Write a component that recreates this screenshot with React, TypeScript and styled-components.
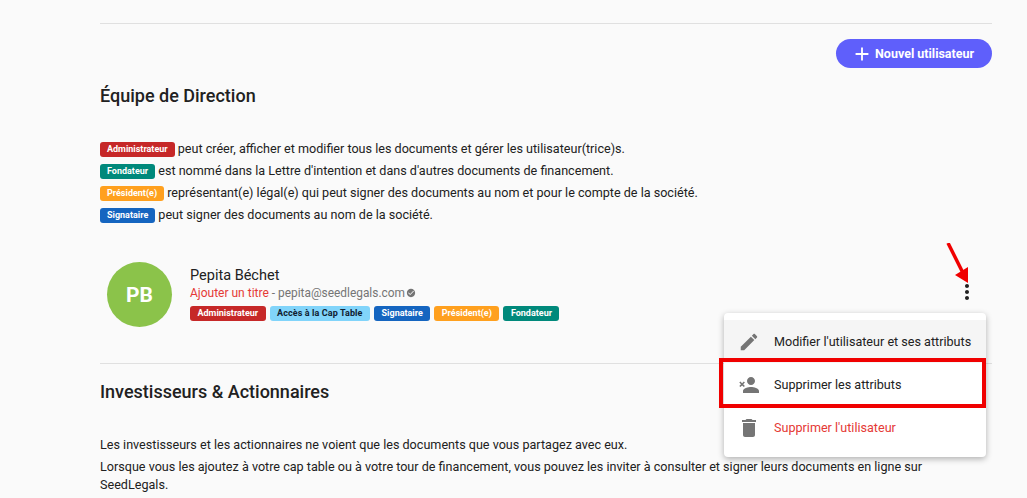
import React from "react";
import styled, { createGlobalStyle } from "styled-components";

const GlobalStyle = createGlobalStyle`
  html, body {
    margin: 0;
    padding: 0;
    height: 498px;
    overflow: hidden;
    background: #fafafa;
    font-family: Roboto, "Liberation Sans", sans-serif;
    color: #212121;
  }
`;

const COLORS: Record<string, string> = {
  red: "#c62828",
  teal: "#00897b",
  orange: "#ffa01e",
  blue: "#1565c0",
  sky: "#81d4fa",
};

function Icon({ d, size = 24, color = "#757575" }: { d: string; size?: number; color?: string }) {
  return (
    <svg width={size} height={size} viewBox="0 0 24 24" fill={color}>
      <path d={d} />
    </svg>
  );
}

function App() {
  return (
    <Page>
      <GlobalStyle />
      <Content>
        <Rule />
        <ButtonRow>
          <AddButton>
            <Icon d="M19 13h-6v6h-2v-6H5v-2h6V5h2v6h6v2z" size={22} color="#fff" />
            Nouvel utilisateur
          </AddButton>
        </ButtonRow>
        <Heading>Équipe de Direction</Heading>
        <Legend>
          <LegendLine>
            <Tag $color="red">Administrateur</Tag> peut créer, afficher et modifier tous les documents et gérer les utilisateur(trice)s.
          </LegendLine>
          <LegendLine>
            <Tag $color="teal">Fondateur</Tag> est nommé dans la Lettre d'intention et dans d'autres documents de financement.
          </LegendLine>
          <LegendLine>
            <Tag $color="orange">Président(e)</Tag> représentant(e) légal(e) qui peut signer des documents au nom et pour le compte de la société.
          </LegendLine>
          <LegendLine>
            <Tag $color="blue">Signataire</Tag> peut signer des documents au nom de la société.
          </LegendLine>
        </Legend>
        <UserRow>
          <Avatar>PB</Avatar>
          <UserInfo>
            <UserName>Pepita Béchet</UserName>
            <UserMeta>
              <RedText>Ajouter un titre</RedText> - pepita@seedlegals.com
              <Icon
                d="M12 2C6.48 2 2 6.48 2 12s4.48 10 10 10 10-4.48 10-10S17.52 2 12 2zm-2 15l-5-5 1.41-1.41L10 14.17l7.59-7.59L19 8l-9 9z"
                size={10}
              />
            </UserMeta>
            <TagRow>
              <Tag $color="red">Administrateur</Tag>
              <Tag $color="sky" $dark>Accès à la Cap Table</Tag>
              <Tag $color="blue">Signataire</Tag>
              <Tag $color="orange">Président(e)</Tag>
              <Tag $color="teal">Fondateur</Tag>
            </TagRow>
          </UserInfo>
          <MoreButton>
            <Icon
              d="M12 8c1.1 0 2-.9 2-2s-.9-2-2-2-2 .9-2 2 .9 2 2 2zm0 2c-1.1 0-2 .9-2 2s.9 2 2 2 2-.9 2-2-.9-2-2-2zm0 6c-1.1 0-2 .9-2 2s.9 2 2 2 2-.9 2-2-.9-2-2-2z"
              color="#212121"
            />
          </MoreButton>
        </UserRow>
        <Rule />
        <SecondHeading>Investisseurs &amp; Actionnaires</SecondHeading>
        <Paragraph>Les investisseurs et les actionnaires ne voient que les documents que vous partagez avec eux.</Paragraph>
        <Paragraph>
          Lorsque vous les ajoutez à votre cap table ou à votre tour de financement, vous pouvez les inviter à consulter et signer leurs documents en ligne sur SeedLegals.
        </Paragraph>
      </Content>

      <Menu>
        <MenuItem $active>
          <IconSlot>
            <Icon d="M3 17.25V21h3.75L17.81 9.94l-3.75-3.75L3 17.25zM20.71 7.04c.39-.39.39-1.02 0-1.41l-2.34-2.34c-.39-.39-1.02-.39-1.41 0l-1.83 1.83 3.75 3.75 1.83-1.83z" size={22} />
          </IconSlot>
          Modifier l'utilisateur et ses attributs
        </MenuItem>
        <MenuItem>
          <IconSlot>
            <Icon d="M14 12c2.21 0 4-1.79 4-4s-1.79-4-4-4-4 1.79-4 4 1.79 4 4 4zm0 2c-2.67 0-8 1.34-8 4v2h16v-2c0-2.66-5.33-4-8-4zM3.4 8.5 2.3 9.6 4 11.3l-1.7 1.7 1.1 1.1L5.1 12.4l1.7 1.7 1.1-1.1-1.7-1.7 1.7-1.7-1.1-1.1-1.7 1.7z" />
          </IconSlot>
          Supprimer les attributs
        </MenuItem>
        <MenuItem $danger>
          <IconSlot>
            <Icon d="M6 19c0 1.1.9 2 2 2h8c1.1 0 2-.9 2-2V7H6v12zM19 4h-3.5l-1-1h-5l-1 1H5v2h14V4z" />
          </IconSlot>
          Supprimer l'utilisateur
        </MenuItem>
      </Menu>

      <Highlight />
      <Arrow width="24" height="44" viewBox="0 0 24 44">
        <line x1="2" y1="0" x2="17" y2="30" stroke="#f00000" strokeWidth="3.5" />
        <polygon points="22,40 9,32 22,24" fill="#f00000" />
      </Arrow>
    </Page>
  );
}

const Page = styled.div`
  position: relative;
  width: 1027px;
  height: 498px;
  overflow: hidden;
  background: #fafafa;
`;
const Content = styled.div`
  width: 892px;
  margin-left: 100px;
  padding-top: 23px;
`;
const Rule = styled.div`
  height: 1px;
  background: #e0e0e0;
`;
const ButtonRow = styled.div`
  display: flex;
  justify-content: flex-end;
  margin-top: 15px;
`;
const AddButton = styled.div`
  display: flex;
  align-items: center;
  gap: 2px;
  box-sizing: border-box;
  width: 156px;
  height: 29px;
  padding-left: 15px;
  border-radius: 15px;
  background: #5f5ffb;
  color: #fff;
  font-size: 12.5px;
  font-weight: 700;
`;
const Heading = styled.h2`
  margin: 16px 0 0;
  font-size: 18px;
  line-height: 24px;
  font-weight: 500;
`;
const Legend = styled.div`
  margin-top: 30px;
`;
const LegendLine = styled.div`
  height: 22px;
  line-height: 22px;
  font-size: 12.6px;
`;
const Tag = styled.span<{ $color: string; $dark?: boolean }>`
  display: inline-block;
  padding: 0 7px;
  height: 15px;
  line-height: 15px;
  border-radius: 3px;
  background: ${(p) => COLORS[p.$color]};
  color: ${(p) => (p.$dark ? "#102030" : "#fff")};
  font-size: 9px;
  font-weight: 700;
  letter-spacing: ${(p) => (p.$dark ? "0.1px" : "0")};
  vertical-align: 1px;
`;
const UserRow = styled.div`
  display: flex;
  align-items: flex-start;
  box-sizing: border-box;
  height: 127px;
  margin-top: 10px;
  padding-top: 26px;
`;
const Avatar = styled.div`
  flex: none;
  display: flex;
  align-items: center;
  justify-content: center;
  width: 65px;
  height: 65px;
  margin-left: 7px;
  border-radius: 50%;
  background: #8bc34a;
  color: #fff;
  font-size: 21px;
  font-weight: 700;
`;
const UserInfo = styled.div`
  flex: 1;
  margin-left: 18px;
`;
const UserName = styled.div`
  margin-top: 6px;
  font-size: 14.5px;
  line-height: 16px;
`;
const UserMeta = styled.div`
  display: flex;
  align-items: center;
  height: 16px;
  margin-top: 1px;
  font-size: 11.9px;
  color: #757575;
  white-space: pre;
  svg { margin-left: 1px; }
`;
const RedText = styled.span`
  color: #e53935;
  font-size: 12px;
`;
const TagRow = styled.div`
  display: flex;
  gap: 4px;
  margin-top: 5px;
  ${Tag} { padding: 0 7.5px; }
`;
const MoreButton = styled.div`
  flex: none;
  height: 24px;
  margin: 18px 13px 0 0;
`;
const SecondHeading = styled.h2`
  margin: 16px 0 0;
  font-size: 18px;
  line-height: 24px;
  font-weight: 500;
`;
const Paragraph = styled.p`
  max-width: 830px;
  margin: 0;
  font-size: 12.6px;
  line-height: 18px;
  & + & { margin-top: 4px; }
  h2 + & { margin-top: 32px; }
`;
const Menu = styled.div`
  position: absolute;
  left: 724px;
  top: 313px;
  box-sizing: border-box;
  width: 262px;
  height: 144px;
  padding-top: 7px;
  border-radius: 4px;
  background: #fff;
  box-shadow: 0 2px 6px rgba(0, 0, 0, 0.3);
`;
const MenuItem = styled.div<{ $active?: boolean; $danger?: boolean }>`
  display: flex;
  align-items: center;
  gap: 13px;
  height: 43px;
  padding-left: 13px;
  background: ${(p) => (p.$active ? "#f5f5f5" : "transparent")};
  color: ${(p) => (p.$danger ? "#e53935" : "#212121")};
  font-size: 12.6px;
`;
const IconSlot = styled.div`
  display: flex;
  align-items: center;
  justify-content: center;
  width: 24px;
  height: 24px;
`;
const Highlight = styled.div`
  position: absolute;
  left: 719px;
  top: 358px;
  width: 259px;
  height: 42px;
  border: 4px solid #f00000;
`;
const Arrow = styled.svg`
  position: absolute;
  left: 946px;
  top: 243px;
`;

export default App;
